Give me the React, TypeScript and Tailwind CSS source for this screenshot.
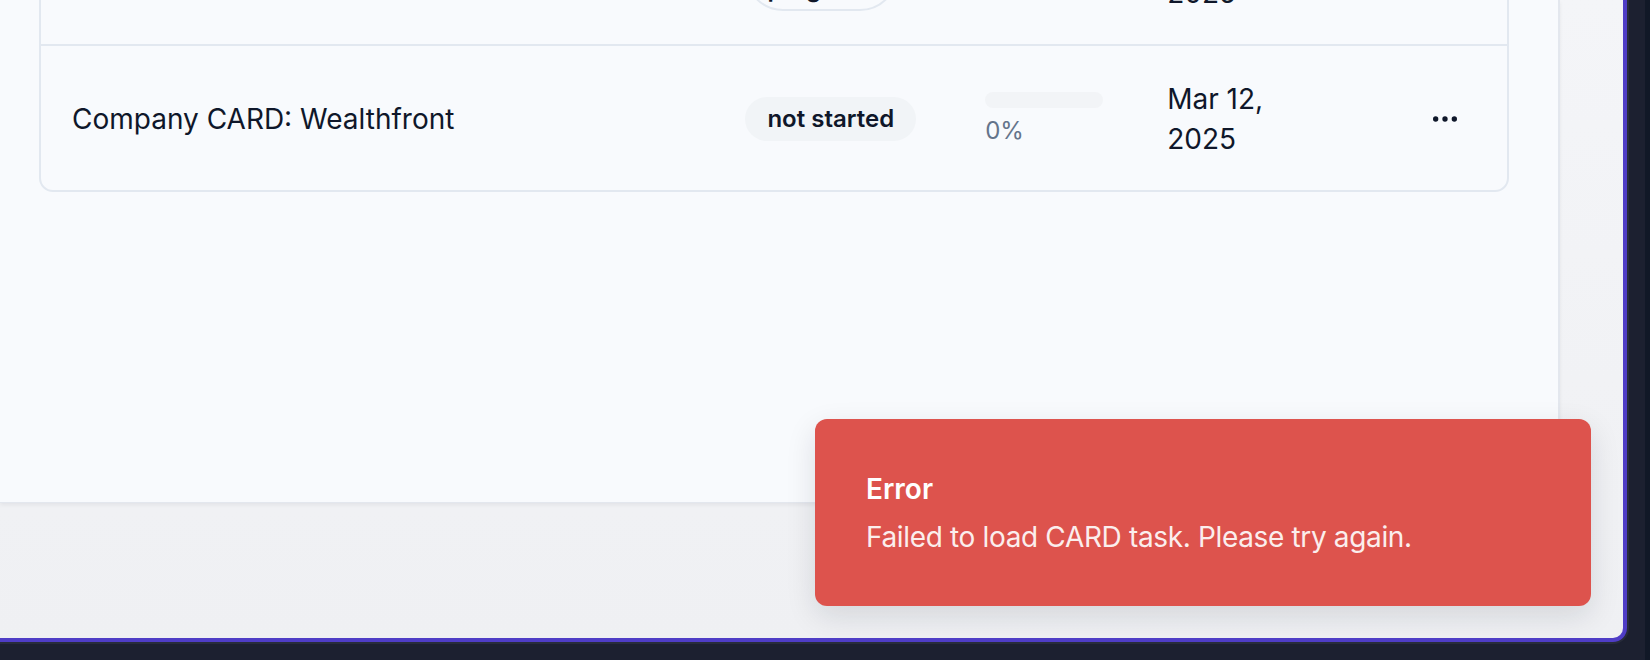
import React from "react";
import { Ellipsis } from "lucide-react";

type Row = {
  name: string;
  status: string;
  outline?: boolean;
  progress: number;
  date: string;
};

const rows: Row[] = [
  {
    name: "Company CARD: Betterment",
    status: "in progress",
    outline: true,
    progress: 45,
    date: "Mar 10, 2025",
  },
  {
    name: "Company CARD: Wealthfront",
    status: "not started",
    progress: 0,
    date: "Mar 12, 2025",
  },
];

function StatusBadge({ row }: { row: Row }) {
  if (row.outline) {
    return (
      <span className="inline-flex w-[153px] rounded-full border-2 border-[#e2e8f0] px-[20px] py-[4px] text-[24px] font-semibold leading-[32px] text-[#0f172a]">
        {row.status}
      </span>
    );
  }
  return (
    <span className="inline-flex rounded-full border-2 border-transparent bg-[#f1f4f7] px-[20px] py-[4px] text-[24px] font-semibold leading-[32px] text-[#0f172a]">
      {row.status}
    </span>
  );
}

export default function App() {
  return (
    <div className="flex h-[660px] w-[1650px] overflow-hidden bg-[#1c2030] font-['Inter',sans-serif]">
      <div className="flex-1">
        {/* APP WINDOW */}
        <div className="relative flex h-[642px] w-[1627px] flex-col overflow-hidden rounded-br-[14px] border-r-4 border-b-4 border-[#4f3dc6] bg-gradient-to-b from-[#f4f5f8] to-[#eff0f3] shadow-[0_0_0_2px_#282c3b]">
          {/* MAIN PANEL */}
          <div className="h-[503px] w-[1560px] shrink-0 overflow-hidden border-r-2 border-b border-[#e3e7ee] bg-[#f8fafd] pl-[39px] shadow-[0_2px_4px_rgba(15,23,42,0.06)]">
            <div className="mt-[-102px] w-[1470px] divide-y-2 divide-[#e2e8f0] rounded-[14px] border-2 border-[#e2e8f0]">
              {rows.map((row) => (
                <div key={row.name} className="flex items-center pt-[33px] pb-[31px] text-[28px] leading-[40px] text-[#0f172a]">
                  <div className="w-[673px] pr-[32px] pl-[31px]">{row.name}</div>
                  <div className="w-[240px] px-[32px]">
                    <StatusBadge row={row} />
                  </div>
                  <div className="w-[182px] px-[32px]">
                    <div className="h-[16px] w-[118px] overflow-hidden rounded-full bg-[#f2f4f7]">
                      <div className="h-full bg-[#0f172a]" style={{ width: `${row.progress}%` }} />
                    </div>
                    <div className="mt-[7px] text-[24px] leading-[32px] text-[#64748b]">{row.progress}%</div>
                  </div>
                  <div className="w-[244px] px-[32px]">
                    <div className="w-[120px]">{row.date}</div>
                  </div>
                  <div className="flex-1 pr-[30px] pl-[34px]">
                    <button className="flex h-[64px] w-[64px] items-center justify-center rounded-[12px] text-[#0f172a]">
                      <Ellipsis size={32} strokeWidth={2} />
                    </button>
                  </div>
                </div>
              ))}
            </div>
          </div>

          {/* TOAST */}
          <div className="absolute right-[32px] bottom-[32px] flex w-[776px] flex-col gap-[8px] rounded-[12px] bg-[#dd534d] pt-[50px] pr-[48px] pb-[49px] pl-[51px] text-white shadow-[0_10px_30px_rgba(15,23,42,0.12)]">
            <div className="text-[28px] font-semibold leading-[40px]">Error</div>
            <div className="text-[28px] leading-[40px] tracking-[-0.35px] opacity-90">
              Failed to load CARD task. Please try again.
            </div>
          </div>
        </div>
      </div>
      <div className="w-[5px] bg-[#111827]" />
    </div>
  );
}
